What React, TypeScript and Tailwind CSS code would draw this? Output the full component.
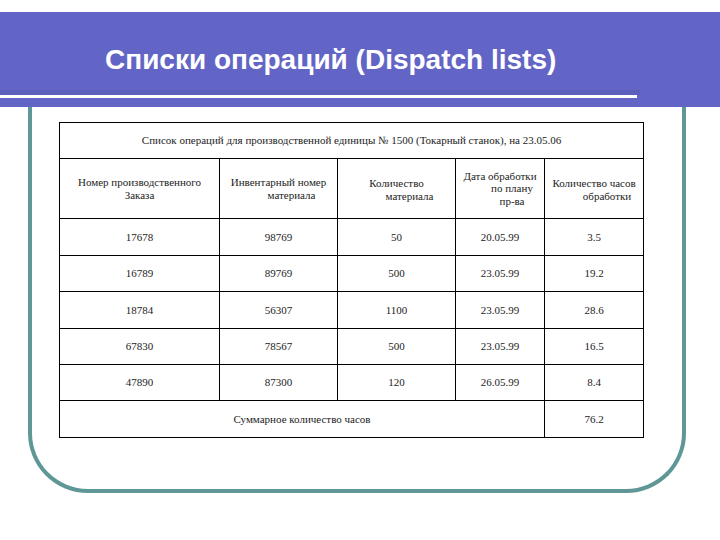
import React from "react";

const rows: string[][] = [
  ["17678", "98769", "50", "20.05.99", "3.5"],
  ["16789", "89769", "500", "23.05.99", "19.2"],
  ["18784", "56307", "1100", "23.05.99", "28.6"],
  ["67830", "78567", "500", "23.05.99", "16.5"],
  ["47890", "87300", "120", "26.05.99", "8.4"],
];

const rowH = ["h-[37px]", "h-[36px]", "h-[37px]", "h-[36px]", "h-[36px]"];

const cell = "border border-black align-middle font-['Liberation_Serif','DejaVu_Serif',serif]";

export default function App() {
  return (
    <div className="w-[720px] h-[540px] bg-white overflow-hidden">
      <div className="pt-[12px]">
        <div className="h-[95px] bg-[#6365c6] flex flex-col">
          <div className="h-[78px] pl-[105px] pt-[34px] text-white font-bold text-[28px] leading-[28px] whitespace-nowrap font-['Liberation_Sans',Arial,sans-serif]">
            Списки операций (Dispatch lists)
          </div>
          <div className="h-[5px] w-[640px] bg-[#5c5fbc]" />
          <div className="h-[3px] w-[637px] bg-white" />
        </div>
      </div>

      <div className="ml-[28px] w-[658px] h-[386px] border-x-4 border-b-4 border-[#5f9797] rounded-b-[60px] pt-[15px] pl-[27px]">
        <table className="table-fixed border-collapse w-[584px] text-[11px] leading-[12.5px] text-[#1c1c1c] text-center font-['Liberation_Serif','DejaVu_Serif',serif]">
          <colgroup>
            <col className="w-[160px]" />
            <col className="w-[118px]" />
            <col className="w-[118px]" />
            <col className="w-[89px]" />
            <col className="w-[99px]" />
          </colgroup>
          <tbody>
            <tr className="h-[36px]">
              <td colSpan={5} className={cell + " whitespace-nowrap"}>
                Список операций для производственной единицы № 1500 (Токарный станок), на 23.05.06
              </td>
            </tr>
            <tr className="h-[60px]">
              <td className={cell}>
                <div className="whitespace-nowrap">Номер производственного</div>
                <div>Заказа</div>
              </td>
              <td className={cell}>
                <div className="whitespace-nowrap">Инвентарный номер</div>
                <div className="pl-[26px]">материала</div>
              </td>
              <td className={cell + " pt-[2px]"}>
                <div>Количество</div>
                <div className="pl-[26px]">материала</div>
              </td>
              <td className={cell}>
                <div className="whitespace-nowrap">Дата обработки</div>
                <div className="pl-[24px]">по плану</div>
                <div className="pl-[24px]">пр-ва</div>
              </td>
              <td className={cell + " pt-[2px]"}>
                <div className="whitespace-nowrap">Количество часов</div>
                <div className="pl-[26px]">обработки</div>
              </td>
            </tr>
            {rows.map((r, i) => (
              <tr key={i} className={rowH[i]}>
                {r.map((c, j) => (
                  <td key={j} className={cell}>
                    {c}
                  </td>
                ))}
              </tr>
            ))}
            <tr className="h-[37px]">
              <td colSpan={4} className={cell}>
                Суммарное количество часов
              </td>
              <td className={cell}>76.2</td>
            </tr>
          </tbody>
        </table>
      </div>
    </div>
  );
}
